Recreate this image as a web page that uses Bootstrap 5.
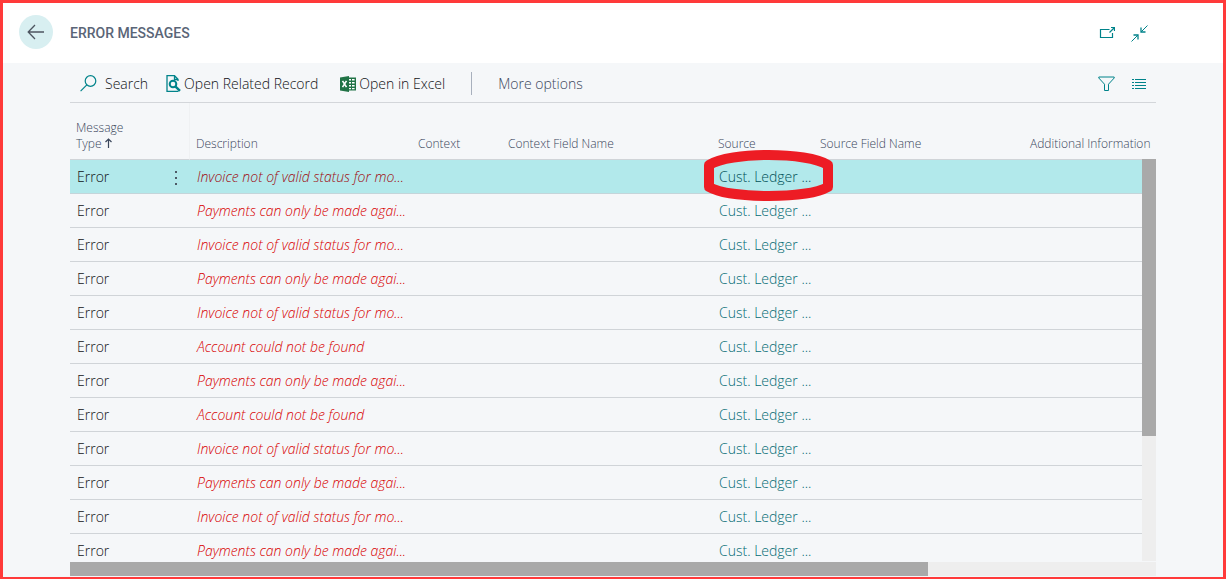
<!DOCTYPE html>
<html lang="en">
<head>
<meta charset="utf-8">
<meta name="viewport" content="width=device-width, initial-scale=1">
<title>Error Messages</title>
<link href="https://cdn.jsdelivr.net/npm/bootstrap@5.3.0/dist/css/bootstrap.min.css" rel="stylesheet">
<style>
body{font-family:"Open Sans","Noto Sans",sans-serif;font-size:14px;font-weight:300;color:#101215;background:#f5f7f9}
.page-frame{height:100vh;border:3px solid #ff3a3a;border-bottom-width:2px;background:#f5f7f9}
.page-head{height:60px;padding:0 67px 2px 16px}
.page-title{font-family:Roboto,sans-serif;font-size:14px;line-height:20px;font-weight:500;color:#5a6577;margin-left:17px;padding-top:2px}
.icon-btn{padding:0;border:0;line-height:0;background:none;color:#00838a}
.back-btn{width:34px;height:34px;border-radius:50%;background:#d8eff1;color:#4d5560}
.page-main{margin:0 67px}
.head-tools{padding:2px 8px 0 0}
.tool-bar{height:40px;border-bottom:1px solid #d3d6da;padding:2px 9px 0 10px}
.tool-btn{padding:0;border:0;background:none;font-size:14px;font-weight:300;line-height:20px;color:#101215;display:flex;align-items:center;gap:3px}
.tool-group{gap:18px}
.tool-sep{width:1px;height:23px;background:#a8b0bd}
.tool-btn.muted-text{color:#3a465b}
.grid-view{overflow:hidden}
.msg-table{width:100%;table-layout:fixed;border-collapse:separate;border-spacing:0;white-space:nowrap}
.msg-table th{height:57px;padding:0 0 7px 6px;vertical-align:bottom;font-size:12px;line-height:16px;font-weight:300;color:#3a465b;border-bottom:1px solid #d0d4d8}
.msg-table th:first-child{border-right:1px solid #eff1f3}
.msg-table td{height:34px;padding:0 0 0 7px;line-height:20px;border-bottom:1px solid #d0d4d8;vertical-align:middle}
.msg-table .row-menu{padding:0;text-align:center}
.msg-table .desc{font-style:italic;color:#d80000}
.msg-table a{color:#006a72;text-decoration:none}
.is-selected td{background:#b2e9eb;border-bottom-color:#c4d5da}
.msg-table .is-selected .desc{color:#a00a10}
.msg-table .is-selected a{color:#005057}
.marker{left:-8px;top:-10px;pointer-events:none}
.v-track{top:56px;right:0;bottom:1px;width:14px;background:#eee}
.v-thumb{height:69%;background:#a9a9a9}
.h-track{height:14px;background:#eee;margin-bottom:1px}
.h-thumb{width:79%;height:14px;background:#a9a9a9}
</style>
</head>
<body>
<div class="page-frame d-flex flex-column">
  <header class="page-head bg-white d-flex align-items-center flex-shrink-0">
    <button type="button" class="icon-btn back-btn d-flex align-items-center justify-content-center" aria-label="Back">
      <svg width="18" height="16" viewBox="0 0 18 16" fill="none" stroke="currentColor" stroke-width="1.3"><path d="M17 8H1.500M8 1L1.200 8L8 15"/></svg>
    </button>
    <h1 class="page-title mb-0">ERROR MESSAGES</h1>
    <div class="head-tools d-flex align-items-center gap-3 ms-auto">
      <button type="button" class="icon-btn" aria-label="Open in new window">
        <svg width="16" height="16" viewBox="0 0 16 16" fill="none" stroke="currentColor"><path d="M10.500 4.500H1.500V12.500H13.500V8" stroke-width="1.200"/><path d="M10.500 7.500L15 3M12 2.500H15.500V6" stroke-width="1.200"/></svg>
      </button>
      <button type="button" class="icon-btn" aria-label="Collapse">
        <svg width="17" height="17" viewBox="0 0 17 17" fill="none" stroke="currentColor"><path d="M16.500.5L10 7M.5 16.500L7 10"/><path d="M10 2.500V7H14.500M2.500 10H7V14.500" stroke-width="1.300"/></svg>
      </button>
    </div>
  </header>
  <main class="page-main d-flex flex-column flex-grow-1 overflow-hidden">
    <div class="tool-bar d-flex align-items-center flex-shrink-0">
      <div class="tool-group d-flex align-items-center">
      <button type="button" class="tool-btn gap-2">
        <svg width="17" height="17" viewBox="0 0 17 17" fill="none" stroke="#00838a" stroke-width="1.200"><circle cx="10.500" cy="6" r="5.300"/><path d="M6.800 9.800L.6 16.200"/></svg>
        <span>Search</span>
      </button>
      <button type="button" class="tool-btn">
        <svg width="15" height="17" viewBox="0 0 15 17" fill="none" stroke="#00838a"><path d="M12.500 16.300H1V.7H8.500L12 4.200V6M8.500.7V4.500H11.500" stroke-width="1.300"/><circle cx="7" cy="9" r="3.300" stroke-width="2"/><path d="M9.300 11.300L14 15.800" stroke-width="2.400"/></svg>
        <span>Open Related Record</span>
      </button>
      <button type="button" class="tool-btn ms-1">
        <svg width="16" height="16" viewBox="0 0 16 16"><path d="M9 1.500H16V14.500H9Z" fill="#217346"/><path d="M9 3H11V4.600H9ZM12 3H14.600V4.600H12ZM9 6H11V7.600H9ZM12 6H14.600V7.600H12ZM9 9H11V10.600H9ZM12 9H14.600V10.600H12ZM9 12H11V13.200H9ZM12 12H14.600V13.200H12Z" fill="#fff"/><path d="M0 1.500L9 0V16L0 14.500Z" fill="#217346"/><path d="M2.500 4.800L6.500 11.200M6.500 4.800L2.500 11.200" stroke="#fff" stroke-width="1.600"/></svg>
        <span>Open in Excel</span>
      </button>
      <span class="tool-sep ms-2"></span>
      <button type="button" class="tool-btn muted-text ms-2">More options</button>
      </div>
      <div class="d-flex align-items-center gap-3 ms-auto">
        <button type="button" class="icon-btn" aria-label="Filter">
          <svg width="17" height="16" viewBox="0 0 17 16" fill="none" stroke="currentColor"><path d="M.8 1H16.200V2L10.500 8.200V14.500H6.500V8.200L.8 2Z"/></svg>
        </button>
        <button type="button" class="icon-btn" aria-label="Show as list">
          <svg width="16" height="12" viewBox="0 0 16 12" stroke="currentColor"><path d="M1 1.500H3M4 1.500H15M1 4.500H3M4 4.500H15M1 7.500H3M4 7.500H15M1 10.500H3M4 10.500H15"/></svg>
        </button>
      </div>
    </div>
    <div class="grid-view position-relative flex-grow-1">
      <table class="msg-table">
        <colgroup><col style="width:91px"><col style="width:29px"><col style="width:222px"><col style="width:90px"><col style="width:210px"><col style="width:102px"><col style="width:210px"><col></colgroup>
        <thead>
          <tr><th scope="col" colspan="2">Message<br>Type <svg class="align-baseline" width="7" height="10" viewBox="0 0 7 10" fill="none" stroke="currentColor" stroke-width="1.200"><path d="M3.500 10V1M.5 4L3.500 1L6.500 4"/></svg></th><th scope="col">Description</th><th scope="col">Context</th><th scope="col">Context Field Name</th><th scope="col">Source</th><th scope="col">Source Field Name</th><th scope="col">Additional Information</th></tr>
        </thead>
        <tbody>
          <tr class="is-selected"><td>Error</td><td class="row-menu"><button type="button" class="icon-btn" aria-label="Row options"><svg width="4" height="16" viewBox="0 0 4 16" fill="#4d5a66"><path d="M1 1H3V3H1ZM1 7H3V9H1ZM1 13H3V15H1Z"/></svg></button></td><td class="desc">Invoice not of valid status for mo...</td><td></td><td></td><td class="position-relative"><a href="#">Cust. Ledger ...</a><svg class="marker position-absolute" width="129" height="51" viewBox="0 0 129 51" fill="none" stroke="#ed1c24" stroke-width="10" stroke-linejoin="round"><path d="M5 15C26 1.700 103 1.700 124 15V37C103 49 26 49 5 37Z"/></svg></td><td></td><td></td></tr>
          <tr><td>Error</td><td></td><td class="desc">Payments can only be made agai...</td><td></td><td></td><td><a href="#">Cust. Ledger ...</a></td><td></td><td></td></tr>
          <tr><td>Error</td><td></td><td class="desc">Invoice not of valid status for mo...</td><td></td><td></td><td><a href="#">Cust. Ledger ...</a></td><td></td><td></td></tr>
          <tr><td>Error</td><td></td><td class="desc">Payments can only be made agai...</td><td></td><td></td><td><a href="#">Cust. Ledger ...</a></td><td></td><td></td></tr>
          <tr><td>Error</td><td></td><td class="desc">Invoice not of valid status for mo...</td><td></td><td></td><td><a href="#">Cust. Ledger ...</a></td><td></td><td></td></tr>
          <tr><td>Error</td><td></td><td class="desc">Account could not be found</td><td></td><td></td><td><a href="#">Cust. Ledger ...</a></td><td></td><td></td></tr>
          <tr><td>Error</td><td></td><td class="desc">Payments can only be made agai...</td><td></td><td></td><td><a href="#">Cust. Ledger ...</a></td><td></td><td></td></tr>
          <tr><td>Error</td><td></td><td class="desc">Account could not be found</td><td></td><td></td><td><a href="#">Cust. Ledger ...</a></td><td></td><td></td></tr>
          <tr><td>Error</td><td></td><td class="desc">Invoice not of valid status for mo...</td><td></td><td></td><td><a href="#">Cust. Ledger ...</a></td><td></td><td></td></tr>
          <tr><td>Error</td><td></td><td class="desc">Payments can only be made agai...</td><td></td><td></td><td><a href="#">Cust. Ledger ...</a></td><td></td><td></td></tr>
          <tr><td>Error</td><td></td><td class="desc">Invoice not of valid status for mo...</td><td></td><td></td><td><a href="#">Cust. Ledger ...</a></td><td></td><td></td></tr>
          <tr><td>Error</td><td></td><td class="desc">Payments can only be made agai...</td><td></td><td></td><td><a href="#">Cust. Ledger ...</a></td><td></td><td></td></tr>
        </tbody>
      </table>
      <div class="v-track position-absolute"><div class="v-thumb"></div></div>
    </div>
    <div class="h-track flex-shrink-0"><div class="h-thumb"></div></div>
  </main>
</div>
<script src="https://cdn.jsdelivr.net/npm/bootstrap@5.3.0/dist/js/bootstrap.bundle.min.js"></script>
</body>
</html>
